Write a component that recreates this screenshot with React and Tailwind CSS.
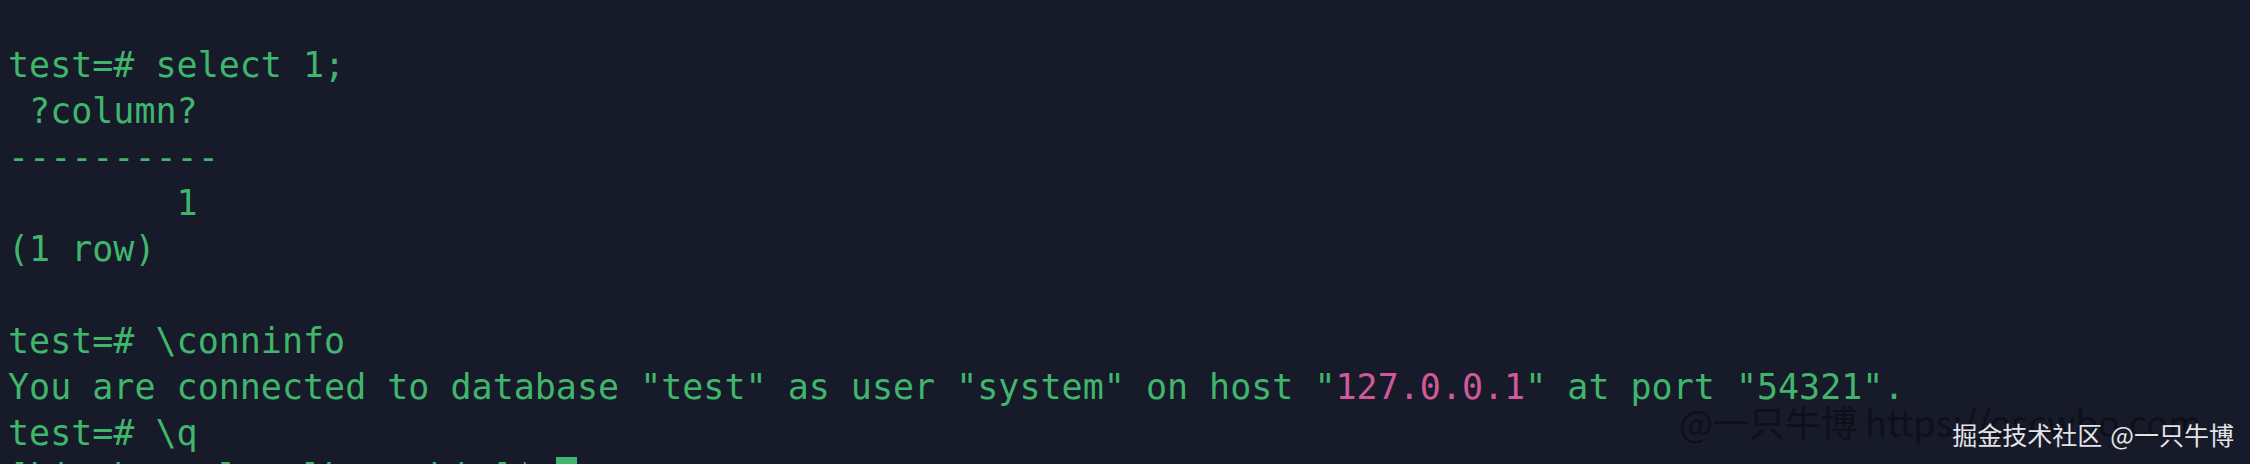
const lines = [
  'test=# select 1;',
  ' ?column?',
  '----------',
  '        1',
  '(1 row)',
  '',
  'test=# \\conninfo',
]

const Terminal = () => {
  return (
    <div className="relative w-[2250px] h-[464px] overflow-hidden bg-[#161a29]">
      <div className="pl-2 pt-[42px] font-['DejaVu_Sans_Mono',monospace] text-[35px] leading-[46px] text-[#3fb66c] whitespace-pre">
        {lines.map((line, i) => (
          <div key={i} className="h-[46px]">{line}</div>
        ))}
        <div className="h-[46px]">
          You are connected to database "test" as user "system" on host "
          <span className="text-[#d0599a]">127.0.0.1</span>
          " at port "54321".
        </div>
        <div className="h-[46px]">test=# \q</div>
        <div className="flex h-[46px]">
          <span className="-mt-[2px]">[kingbase@localhost bin]$ </span>
          <span className="mt-[1px] w-[21px] h-[45px] bg-[#3fb66c]" />
        </div>
      </div>

      {/* watermarks */}
      <div className="absolute left-[1679px] top-[397px] font-['Noto_Sans_CJK_SC',sans-serif] text-[36px] leading-[48px] text-[#0d101a] whitespace-nowrap">
        @一只牛博 https://oscwbo.com
      </div>
      <div className="absolute right-[16px] top-[417px] flex gap-[8px] font-['Noto_Sans_CJK_SC',sans-serif] text-[25px] leading-[34px] text-[#e4e4e8] whitespace-nowrap">
        <span>掘金技术社区</span>
        <span>@一只牛博</span>
      </div>
    </div>
  )
}

export default function App() {
  return <Terminal />
}
